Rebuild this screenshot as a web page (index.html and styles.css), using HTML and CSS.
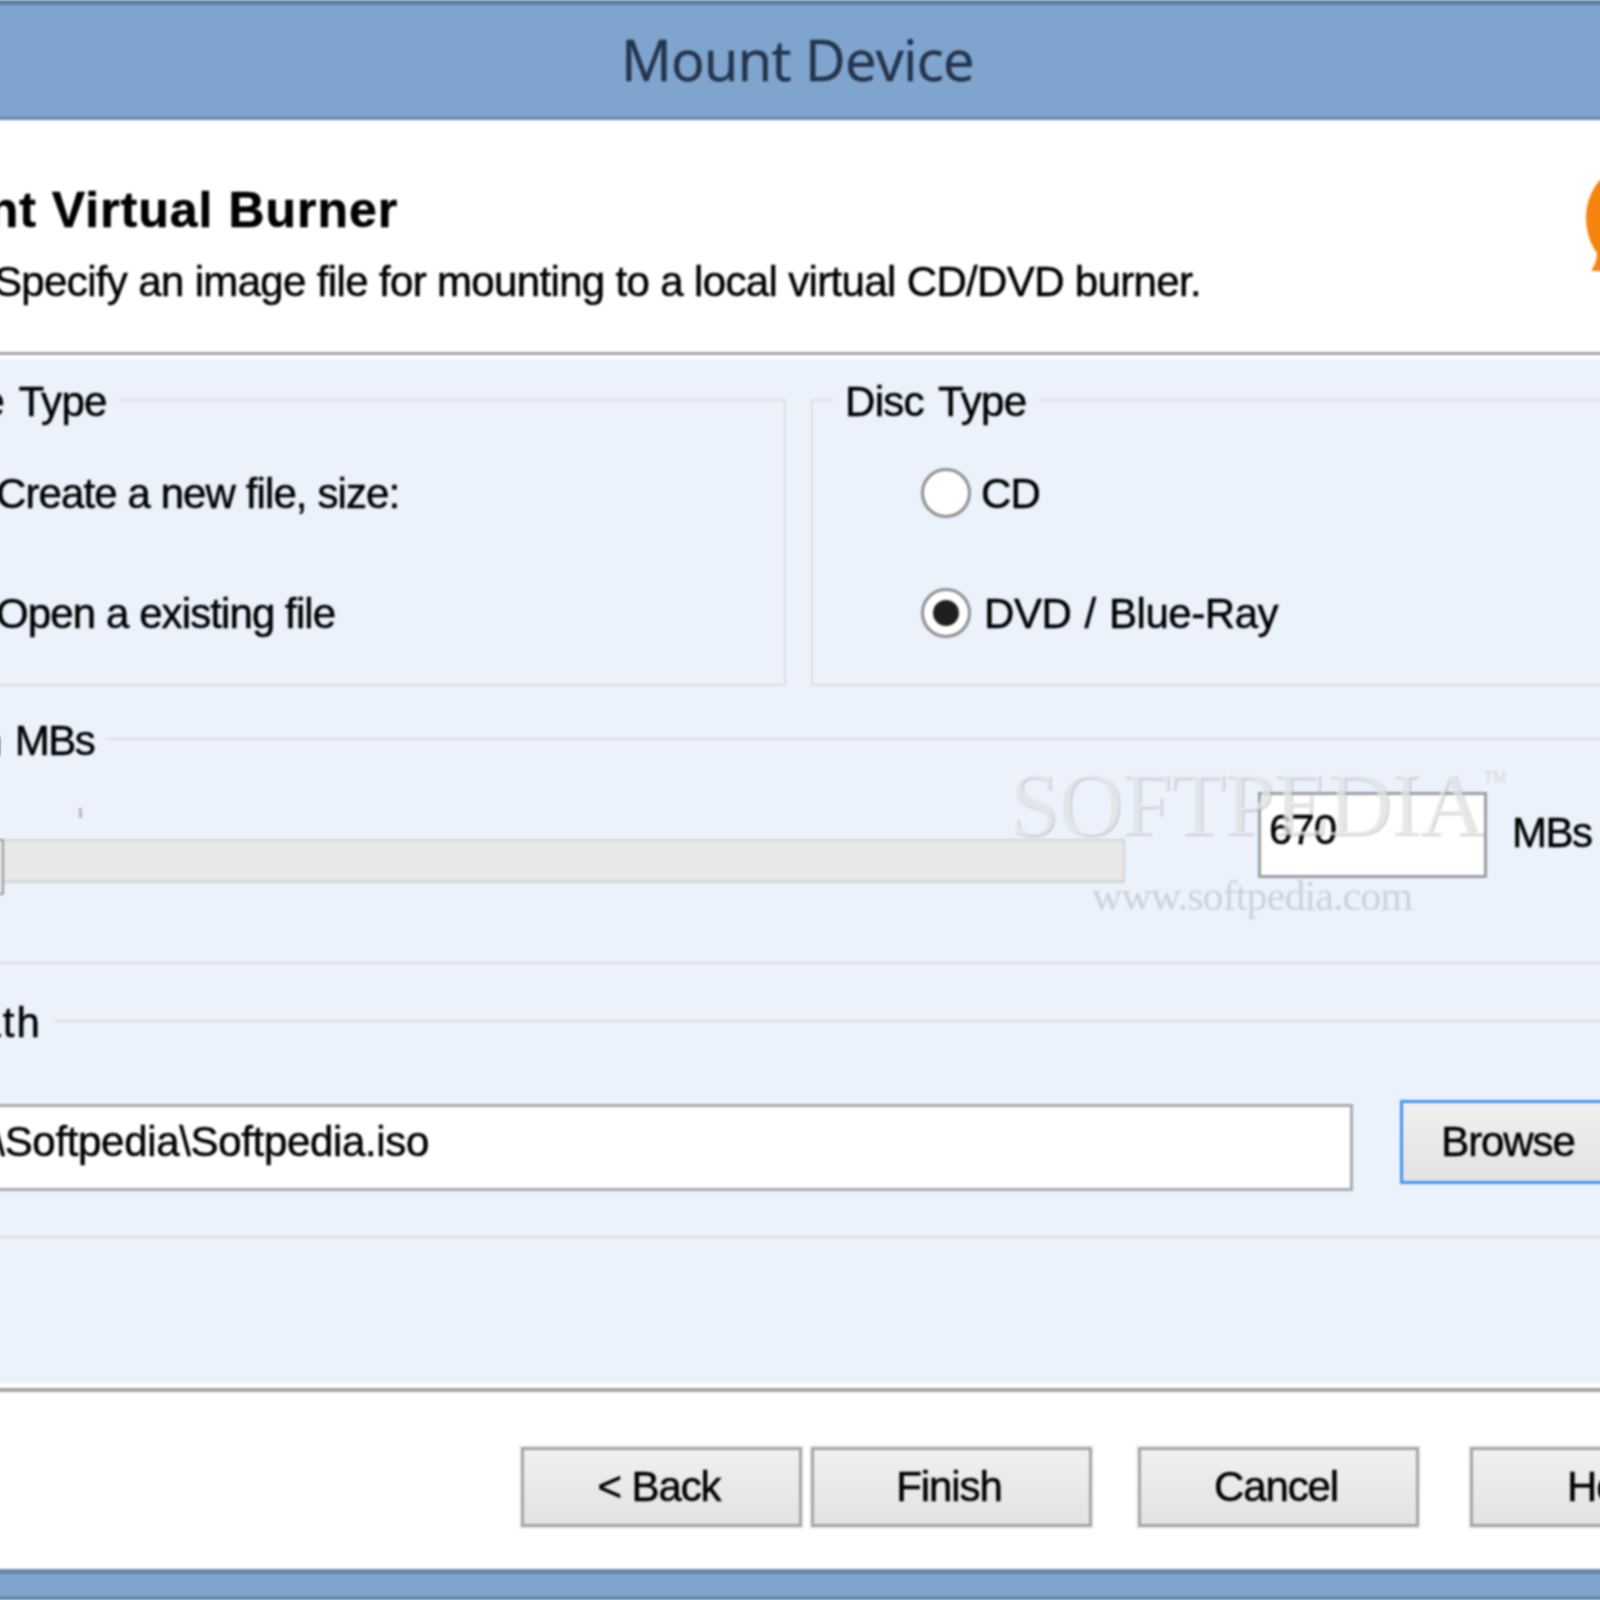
FILE: index.html
```html
<!DOCTYPE html>
<html lang="en">
<head>
<meta charset="utf-8">
<title>Mount Device</title>
<link rel="stylesheet" href="styles.css">
</head>
<body>
<div class="window">
  <header class="titlebar"><span class="title-text">Mount Device</span></header>
  <section class="banner">
    <h1 class="heading">Mount Virtual Burner</h1>
    <p class="subheading">Specify an image file for mounting to a local virtual CD/DVD burner.</p>
    <svg class="logo" viewBox="0 0 40 100" aria-hidden="true">
      <path d="M14 5C6 14 0 28 0 42c0 16 5 28 11 36 0 6-2 12-5 16v2h34V5Z" fill="#f5840f"/>
    </svg>
  </section>
  <main class="panel">
    <div class="top-row">
      <fieldset class="group group-image">
        <legend class="legend legend-image">Image Type</legend>
        <label class="option"><span class="radio"></span><span class="option-text">Create a new file, size:</span></label>
        <label class="option"><span class="radio"></span><span class="option-text">Open a existing file</span></label>
      </fieldset>
      <fieldset class="group group-disc">
        <legend class="legend">Disc Type</legend>
        <label class="option"><span class="radio"></span><span class="option-text">CD</span></label>
        <label class="option"><span class="radio radio-on"></span><span class="option-text option-dvd">DVD / Blue-Ray</span></label>
      </fieldset>
    </div>
    <fieldset class="group group-size">
      <legend class="legend legend-size">Size in MBs</legend>
      <div class="size-row">
        <div class="slider">
          <span class="tick"></span>
          <div class="track"><span class="thumb"></span></div>
        </div>
        <div class="size-input">670</div>
        <span class="unit">MBs</span>
      </div>
    </fieldset>
    <fieldset class="group group-path">
      <legend class="legend legend-path">File Path</legend>
      <div class="path-row">
        <div class="path-input">C:\Softpedia\Softpedia.iso</div>
        <button class="btn btn-focus" type="button">Browse</button>
      </div>
    </fieldset>
  </main>
  <footer class="actions">
    <button class="btn btn-nav" type="button">&lt; Back</button>
    <button class="btn btn-nav" type="button">Finish</button>
    <button class="btn btn-nav btn-cancel" type="button">Cancel</button>
    <button class="btn btn-nav btn-help" type="button">Help</button>
  </footer>
  <div class="statusbar"></div>
  <div class="watermark" aria-hidden="true">
    <span class="wm-main">SOFTPEDIA<sup class="wm-tm">TM</sup></span>
    <span class="wm-url">www.softpedia.com</span>
  </div>
</div>
</body>
</html>
```
FILE: styles.css
```css
* { box-sizing: border-box; }
html, body { margin: 0; padding: 0; width: 1600px; height: 1600px; overflow: hidden; background: #fff; }
body { font-family: "Liberation Sans", Arial, sans-serif; color: #000; }

.window {
  position: relative;
  width: 2000px;
  height: 1600px;
  margin-left: -200px;
  display: flex;
  flex-direction: column;
  filter: blur(0.8px);
  -webkit-text-stroke: 0.5px currentColor;
}

.titlebar {
  height: 120px;
  flex: none;
  background: #7fa4cd;
  border-top: 5px solid #5f7ea3;
  border-bottom: 3px solid #6688b0;
  display: flex;
  justify-content: center;
  align-items: center;
}
.title-text { font-family: "Open Sans", sans-serif; font-size: 56px; color: #24344c; letter-spacing: -0.6px; margin-right: 5px; position: relative; top: -2px; }

.banner {
  height: 235px;
  flex: none;
  background: #fff;
  border-bottom: 3px solid #a3a3a3;
  position: relative;
  padding: 60px 0 0 82px;
}
.heading { margin: 0; font-size: 50px; line-height: 60px; font-weight: 700; color: #000; letter-spacing: 1px; }
.subheading { margin: 17px 0 0 112px; font-size: 42px; line-height: 50px; letter-spacing: -0.65px; }
.logo { position: absolute; left: 1786px; top: 55px; width: 40px; height: 100px; }

.panel {
  flex: none;
  height: 1028px;
  background: #ebf2fb;
  border-top: 4px solid #fff;
  padding: 19px 70px 0;
  display: flex;
  flex-direction: column;
}

.top-row { display: flex; gap: 25px; }
.group { margin: 0; padding: 0; min-width: 0; border: 2px solid #dedfe0; }
.legend { font-size: 42px; line-height: 40px; padding: 4px 12px 0; margin-left: 20px; letter-spacing: -0.7px; word-spacing: 4px; }
.legend-image { margin-left: 7px; }
.legend-size { margin-left: -3px; letter-spacing: -1.5px; }
.legend-path { margin-left: -30px; letter-spacing: 2px; }

.group-image { width: 916px; height: 308px; padding-top: 48px; }
.group-disc { flex: 1; height: 308px; padding-top: 48px; }
.group-image .option { padding-left: 64px; }
.group-disc .option { padding-left: 108px; }

.option { display: flex; align-items: center; gap: 10px; height: 48px; margin-bottom: 72px; font-size: 42px; letter-spacing: -0.9px; }
.option-dvd { margin-left: 3px; letter-spacing: -0.45px; word-spacing: 2px; }
.radio {
  flex: none;
  width: 50px;
  height: 50px;
  margin-bottom: 3px;
  border-radius: 50%;
  background: #fff;
  border: 3px solid #8f8f8f;
  display: flex;
  align-items: center;
  justify-content: center;
}
.radio-on::before { content: ""; width: 26px; height: 26px; border-radius: 50%; background: #1f1f1f; }

.group-size { margin-top: 31px; height: 247px; }
.size-row { display: flex; align-items: flex-start; padding: 31px 0 0 130px; }
.slider { width: 1123px; flex: none; padding-top: 47px; position: relative; }
.tick { position: absolute; left: 77px; top: 16px; width: 3px; height: 10px; background: #b5b5b5; }
.track { height: 44px; background: #e7e8e8; border: 2px solid #d4d4d4; border-bottom-width: 3px; position: relative; }
.thumb { position: absolute; left: -8px; top: -2px; width: 8px; height: 56px; border: 2px solid #9a9a9a; border-radius: 0 2px 2px 0; background: #e7e8e8; }
.size-input { width: 229px; height: 86px; flex: none; margin-left: 133px; background: #fff; border: 3px solid #9b9ea2; font-size: 42px; line-height: 70px; padding-left: 8px; letter-spacing: -1px; }
.unit { font-size: 42px; line-height: 50px; margin: 16px 0 0 25px; letter-spacing: -1.5px; }

.group-path { margin-top: 35px; height: 239px; }
.path-row { display: flex; align-items: flex-start; padding: 61px 0 0 0; }
.path-input { width: 1423px; height: 87px; flex: none; margin-left: 58px; background: #fff; border: 3px solid #a9abae; font-size: 42px; line-height: 70px; padding-left: 19px; letter-spacing: -0.33px; }

.btn { font-family: inherit; font-size: 42px; letter-spacing: -1.1px; color: #000; background: linear-gradient(#f0f0f0, #e3e3e3); border: 3px solid #a5a5a5; box-shadow: 0 0 0 2px #f3f3f3; padding: 0; }
.btn-focus { width: 216px; height: 84px; margin: -4px 0 0 47px; border-color: #3d94f2; }

.actions {
  flex: none;
  height: 181px;
  background: #fff;
  border-top: 4px solid #a3a3a3;
  display: flex;
  gap: 9px;
  padding: 55px 0 0 721px;
  margin-top: 5px;
}
.btn-nav { width: 281px; height: 80px; padding-right: 5px; }
.btn-cancel { margin-left: 37px; }
.btn-help { margin-left: 42px; }

.statusbar { flex: 1; background: #7fa4cd; border-top: 5px solid #6688b0; border-bottom: 3px solid #5f7ea3; }

.watermark {
  position: absolute;
  left: 1209px;
  top: 760px;
  width: 500px;
  display: flex;
  flex-direction: column;
  font-family: "Liberation Serif", serif;
  pointer-events: none;
  -webkit-text-stroke: 0;
}
.wm-main { font-size: 90px; line-height: 90px; letter-spacing: -1.2px; color: rgba(255,255,255,.6); text-shadow: 1px 1px 1px rgba(120,125,135,.45); white-space: nowrap; }
.wm-tm { font-family: "Liberation Sans", sans-serif; font-size: 16px; letter-spacing: 0; line-height: 0; vertical-align: 52px; color: #d5d9df; text-shadow: none; }
.wm-url { font-size: 42px; line-height: 44px; margin: 24px 0 0 83px; letter-spacing: -0.9px; color: rgba(130,135,145,.3); white-space: nowrap; }
```
